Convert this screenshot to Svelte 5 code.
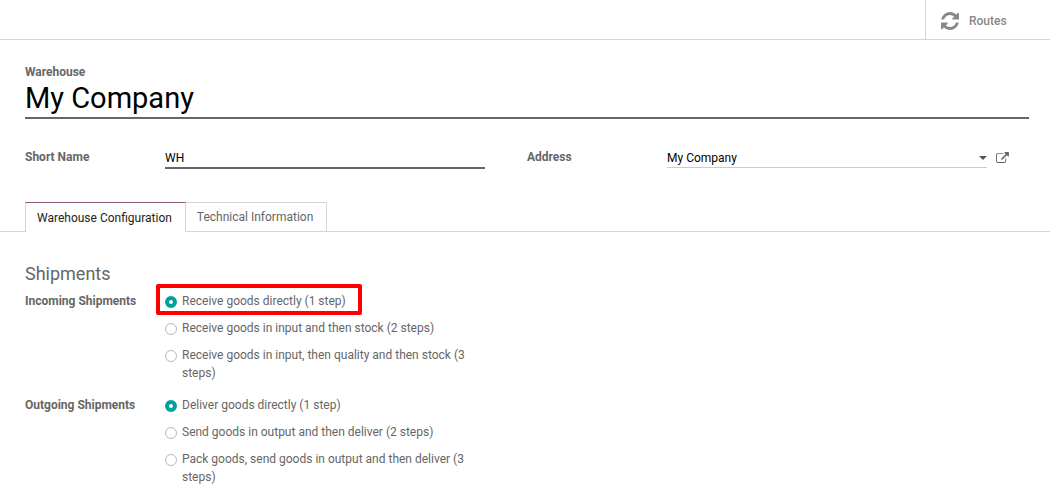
<script lang="ts">
	let warehouse = 'My Company';
	let shortName = 'WH';
	let address = 'My Company';
	let activeTab = 0;

	const tabs = ['Warehouse Configuration', 'Technical Information'];

	const shipments = [
		{
			name: 'incoming',
			label: 'Incoming Shipments',
			options: [
				'Receive goods directly (1 step)',
				'Receive goods in input and then stock (2 steps)',
				'Receive goods in input, then quality and then stock (3 steps)'
			]
		},
		{
			name: 'outgoing',
			label: 'Outgoing Shipments',
			options: [
				'Deliver goods directly (1 step)',
				'Send goods in output and then deliver (2 steps)',
				'Pack goods, send goods in output and then deliver (3 steps)'
			]
		}
	];

	let selected: Record<string, number> = { incoming: 0, outgoing: 0 };
</script>

<header>
	<button class="stat">
		<svg viewBox="0 0 1536 1536" width="18" height="18" aria-hidden="true">
			<path
				d="M1511 928q0 5-1 7-64 268-268 434.5T764 1536q-146 0-282.5-55T238 1324l-129 129q-19 19-45 19t-45-19-19-45V960q0-26 19-45t45-19h448q26 0 45 19t19 45-19 45l-137 137q71 66 161 102t187 36q134 0 250-65t186-179q11-17 53-117 8-23 30-23h192q13 0 22.5 9.5t9.5 22.5zm25-800v448q0 26-19 45t-45 19h-448q-26 0-45-19t-19-45 19-45l138-138Q969 256 768 256q-134 0-250 65T332 500q-11 17-53 117-8 23-30 23H50q-13 0-22.5-9.5T18 608v-7q65-268 270-434.5T768 0q146 0 284 55.5T1297 212l130-129q19-19 45-19t45 19 19 45z"
			/>
		</svg>
		Routes
	</button>
</header>

<main>
	<div class="title">
		<label for="warehouse">Warehouse</label>
		<input id="warehouse" type="text" bind:value={warehouse} />
	</div>

	<div class="group">
		<div class="field">
			<label for="short-name">Short Name</label>
			<input id="short-name" type="text" bind:value={shortName} />
		</div>
		<div class="field">
			<label for="address">Address</label>
			<div class="many2one">
				<select id="address" bind:value={address}>
					<option>My Company</option>
				</select>
				<span class="caret"></span>
			</div>
			<button class="external" aria-label="External link">
				<svg viewBox="0 0 1792 1536" width="13" height="11" aria-hidden="true">
					<path
						d="M1408 928v320q0 119-84.5 203.5T1120 1536H288q-119 0-203.5-84.5T0 1248V416q0-119 84.5-203.5T288 128h704q14 0 23 9t9 23v64q0 14-9 23t-23 9H288q-66 0-113 47t-47 113v832q0 66 47 113t113 47h832q66 0 113-47t47-113V928q0-14 9-23t23-9h64q14 0 23 9t9 23zm384-864v512q0 26-19 45t-45 19-45-19l-176-176-652 652q-10 10-23 10t-23-10L695 983q-10-10-10-23t10-23l652-652-176-176q-19-19-19-45t19-45 45-19h512q26 0 45 19t19 45z"
					/>
				</svg>
			</button>
		</div>
	</div>

	<div class="tabs" role="tablist">
		{#each tabs as tab, i}
			<button
				role="tab"
				class:active={activeTab === i}
				aria-selected={activeTab === i}
				on:click={() => (activeTab = i)}>{tab}</button
			>
		{/each}
	</div>

	{#if activeTab === 0}
		<div class="group">
			<section>
				<h2>Shipments</h2>
				{#each shipments as group, g}
					<div class="radios" role="radiogroup" aria-labelledby={group.name}>
						<span class="name" id={group.name}>{group.label}</span>
						<div class="options">
							{#each group.options as option, i}
								<label class:highlight={g === 0 && i === 0}>
									<input
										type="radio"
										name={group.name}
										value={i}
										bind:group={selected[group.name]}
									/>
									<span>{option}</span>
								</label>
							{/each}
						</div>
					</div>
				{/each}
			</section>
		</div>
	{/if}
</main>

<style>
	:global(body) {
		background: #fff;
		color: #666;
		font: 12px/18px Roboto, 'Liberation Sans', sans-serif;
	}

	button,
	input,
	select {
		font: inherit;
		color: inherit;
		margin: 0;
		padding: 0;
		border: 0;
		border-radius: 0;
		background: none;
		box-sizing: border-box;
	}

	svg {
		fill: currentColor;
		display: block;
	}

	header {
		display: flex;
		justify-content: flex-end;
		border-bottom: 1px solid #d2d7db;
	}

	.stat {
		display: flex;
		align-items: center;
		gap: 10px;
		width: 125px;
		height: 39px;
		padding: 2px 15px 0;
		border-left: 1px solid #d2d7db;
		color: #888;
		font-weight: 500;
	}

	main {
		padding: 23px 21px 9px 25px;
	}

	.title label,
	.field label,
	.name {
		font-weight: 700;
	}

	.title {
		display: flex;
		flex-direction: column;
		margin-bottom: 28px;
	}

	.title input {
		height: 38px;
		padding-bottom: 2px;
		border-bottom: 2px solid #666;
		color: #000;
		font-size: 29px;
	}

	.group {
		display: grid;
		grid-template-columns: 1fr 1fr;
	}

	.field,
	.radios {
		display: grid;
		grid-template-columns: 140px 1fr 42px;
	}

	.field label {
		padding-top: 1px;
	}

	.field > input {
		height: 22px;
		padding-top: 1px;
		border-bottom: 2px solid #666;
		color: #000;
	}

	.many2one {
		position: relative;
		height: 20px;
		border-bottom: 1px solid #ccc;
	}

	select {
		appearance: none;
		width: 100%;
		height: 20px;
		padding-top: 1px;
		color: #000;
	}

	.caret {
		position: absolute;
		right: 0;
		top: 9px;
		border: 4px solid transparent;
		border-top-color: #555;
		border-bottom: 0;
		pointer-events: none;
	}

	.external {
		align-self: start;
		justify-self: start;
		padding: 5px 9px;
	}

	.tabs {
		display: flex;
		margin: 33px -21px 32px -25px;
		padding-left: 25px;
		border-bottom: 1px solid #d2d7db;
	}

	.tabs button {
		height: 29px;
		padding: 0 13px 0 11px;
		border: 1px solid #d2d7db;
		border-left: 0;
		border-bottom: 0;
	}

	.tabs .active {
		height: 30px;
		margin-bottom: -1px;
		border-left: 1px solid #d2d7db;
		border-top-color: #875a7b;
		background: #fff;
		color: #222;
	}

	h2 {
		margin: 0 0 8px;
		font-size: 18px;
		font-weight: 400;
		line-height: 20px;
	}

	.radios {
		margin-bottom: 14px;
	}

	.options {
		display: flex;
		flex-direction: column;
		align-items: flex-start;
		gap: 9px;
	}

	.options label {
		display: flex;
		gap: 5px;
		position: relative;
	}

	.options input {
		appearance: none;
		flex: none;
		width: 12px;
		height: 12px;
		margin-top: 4px;
		border: 1px solid #b5bac0;
		border-radius: 50%;
	}

	.options input:checked {
		border: 4px solid #00a09d;
	}

	.highlight::after {
		content: '';
		position: absolute;
		inset: -8px -16px -5px -9px;
		border: 4px solid #f00;
		border-radius: 2px;
		pointer-events: none;
	}
</style>
